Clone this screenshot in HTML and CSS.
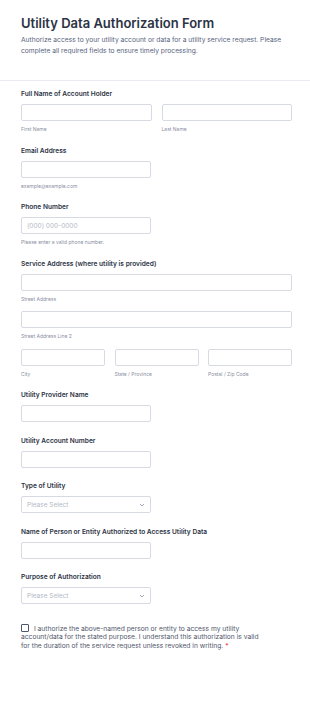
FILE: index.html
```html
<!DOCTYPE html>
<html lang="en">
<head>
    <meta charset="UTF-8">
    <meta name="viewport" content="width=device-width, initial-scale=1.0">
    <title>Utility Data Authorization Form</title>
    <link rel="stylesheet" href="styles.css">
</head>
<body>
    <div class="header">
        <h1>Utility Data Authorization Form</h1>
        <p>Authorize access to your utility account or data for a utility service request. Please complete all required fields to ensure timely processing.</p>
    </div>

    <form class="form">
        <div class="field">
            <label class="label">Full Name of Account Holder</label>
            <div class="row two">
                <div>
                    <input type="text">
                    <span class="sub">First Name</span>
                </div>
                <div>
                    <input type="text">
                    <span class="sub">Last Name</span>
                </div>
            </div>
        </div>

        <div class="field">
            <label class="label">Email Address</label>
            <input type="email" class="short">
            <span class="sub">example@example.com</span>
        </div>

        <div class="field">
            <label class="label">Phone Number</label>
            <input type="tel" class="short" placeholder="(000) 000-0000">
            <span class="sub">Please enter a valid phone number.</span>
        </div>

        <div class="field">
            <label class="label">Service Address (where utility is provided)</label>
            <div class="line">
                <input type="text">
                <span class="sub">Street Address</span>
            </div>
            <div class="line">
                <input type="text">
                <span class="sub">Street Address Line 2</span>
            </div>
            <div class="row three">
                <div>
                    <input type="text">
                    <span class="sub">City</span>
                </div>
                <div>
                    <input type="text">
                    <span class="sub">State / Province</span>
                </div>
                <div>
                    <input type="text">
                    <span class="sub">Postal / Zip Code</span>
                </div>
            </div>
        </div>

        <div class="field">
            <label class="label">Utility Provider Name</label>
            <input type="text" class="short">
        </div>

        <div class="field">
            <label class="label">Utility Account Number</label>
            <input type="text" class="short">
        </div>

        <div class="field">
            <label class="label">Type of Utility</label>
            <div class="select short">
                <span>Please Select</span>
                <svg width="6" height="4" viewBox="0 0 6 4"><path d="M1 1l2 2 2-2" fill="none" stroke="#8a8fa3" stroke-width="0.8"/></svg>
            </div>
        </div>

        <div class="field">
            <label class="label">Name of Person or Entity Authorized to Access Utility Data</label>
            <input type="text" class="short">
        </div>

        <div class="field">
            <label class="label">Purpose of Authorization</label>
            <div class="select short">
                <span>Please Select</span>
                <svg width="6" height="4" viewBox="0 0 6 4"><path d="M1 1l2 2 2-2" fill="none" stroke="#8a8fa3" stroke-width="0.8"/></svg>
            </div>
        </div>

        <div class="consent">
            <span class="box"></span>
            I authorize the above-named person or entity to access my utility account/data for the stated purpose. I understand this authorization is valid for the duration of the service request unless revoked in writing. <span class="req">*</span>
        </div>
    </form>
</body>
</html>
```

FILE: styles.css
```css
body {
    margin: 0;
    font-family: Inter, "Noto Sans", sans-serif;
    background-color: #ffffff;
    color: #2c3345;
}
.header {
    padding: 15px 18px 23.5px 21px;
    border-bottom: 1px solid #eaebf0;
}
.header h1 {
    margin: 0;
    font-size: 13px;
    line-height: 17px;
    font-weight: 600;
    color: #2c3345;
}
.header p {
    margin: 2.5px 0 0;
    font-size: 6.7px;
    line-height: 11px;
    color: #57647e;
}
.form {
    padding: 8px 18px 40px 21px;
}
.field {
    margin-bottom: 13.5px;
}
.label {
    display: block;
    font-size: 6.6px;
    line-height: 10px;
    font-weight: 600;
    margin-bottom: 5px;
    color: #2c3345;
}
input {
    display: block;
    box-sizing: border-box;
    width: 100%;
    height: 17px;
    margin: 0;
    padding: 0 5px;
    border: 1px solid #d7dae3;
    border-radius: 2px;
    background-color: #ffffff;
    font-family: Inter, sans-serif;
    font-size: 6.5px;
    color: #2c3345;
}
input::placeholder {
    color: #b4b8c6;
}
.short {
    width: 130px;
}
.sub {
    display: block;
    margin-top: 4px;
    margin-bottom: -1px;
    font-size: 5px;
    line-height: 8px;
    color: #8a8fa3;
}
.row {
    display: grid;
    gap: 10px;
}
.two {
    grid-template-columns: 1fr 1fr;
}
.three {
    grid-template-columns: 1fr 1fr 1fr;
    gap: 9.5px;
}
.line {
    margin-bottom: 9.5px;
}
.select {
    box-sizing: border-box;
    height: 17px;
    display: flex;
    align-items: center;
    justify-content: space-between;
    padding: 0 5px;
    border: 1px solid #d7dae3;
    border-radius: 2px;
    font-size: 6.5px;
    color: #b4b8c6;
}
.consent {
    margin-top: 19.5px;
    max-width: 242px;
    font-size: 6.7px;
    line-height: 9px;
    color: #50566b;
}
.box {
    display: inline-block;
    box-sizing: border-box;
    width: 8px;
    height: 8px;
    margin-right: 3px;
    vertical-align: -1.5px;
    border: 1px solid #50566b;
    border-radius: 1px;
}
.req {
    color: #f23a3c;
}
```
